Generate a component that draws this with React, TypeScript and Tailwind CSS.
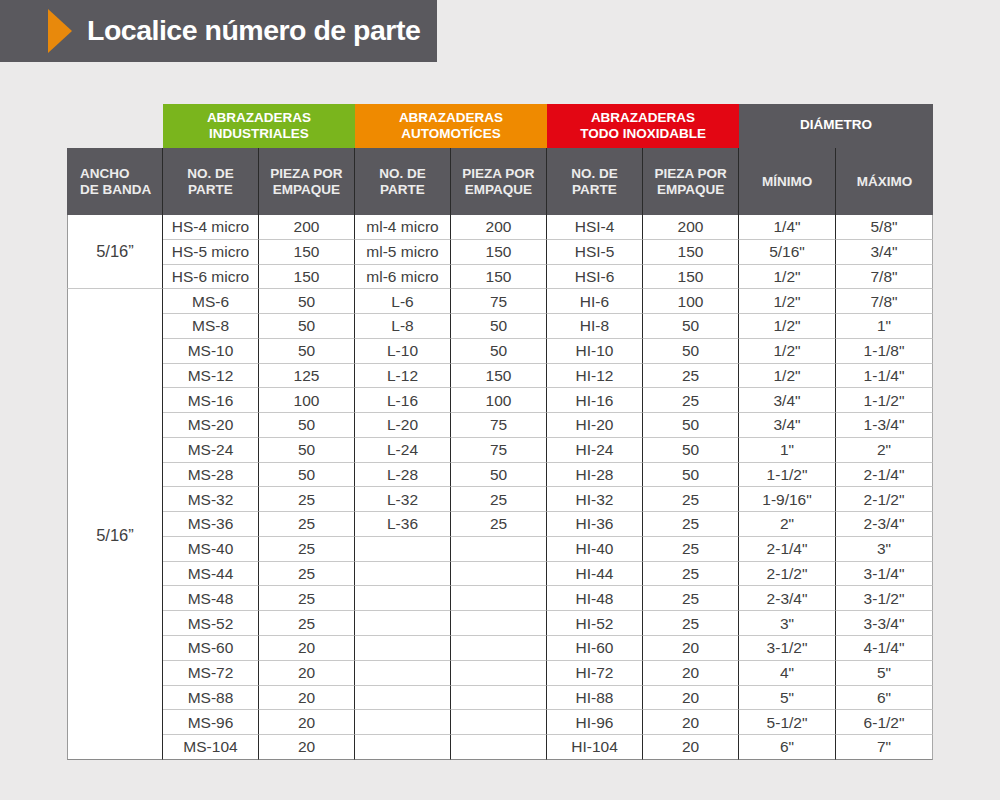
const top = [
  ["HS-4 micro", "200", "ml-4 micro", "200", "HSI-4", "200", '1/4"', '5/8"'],
  ["HS-5 micro", "150", "ml-5 micro", "150", "HSI-5", "150", '5/16"', '3/4"'],
  ["HS-6 micro", "150", "ml-6 micro", "150", "HSI-6", "150", '1/2"', '7/8"'],
];

const rest = [
  ["MS-6", "50", "L-6", "75", "HI-6", "100", '1/2"', '7/8"'],
  ["MS-8", "50", "L-8", "50", "HI-8", "50", '1/2"', '1"'],
  ["MS-10", "50", "L-10", "50", "HI-10", "50", '1/2"', '1-1/8"'],
  ["MS-12", "125", "L-12", "150", "HI-12", "25", '1/2"', '1-1/4"'],
  ["MS-16", "100", "L-16", "100", "HI-16", "25", '3/4"', '1-1/2"'],
  ["MS-20", "50", "L-20", "75", "HI-20", "50", '3/4"', '1-3/4"'],
  ["MS-24", "50", "L-24", "75", "HI-24", "50", '1"', '2"'],
  ["MS-28", "50", "L-28", "50", "HI-28", "50", '1-1/2"', '2-1/4"'],
  ["MS-32", "25", "L-32", "25", "HI-32", "25", '1-9/16"', '2-1/2"'],
  ["MS-36", "25", "L-36", "25", "HI-36", "25", '2"', '2-3/4"'],
  ["MS-40", "25", "", "", "HI-40", "25", '2-1/4"', '3"'],
  ["MS-44", "25", "", "", "HI-44", "25", '2-1/2"', '3-1/4"'],
  ["MS-48", "25", "", "", "HI-48", "25", '2-3/4"', '3-1/2"'],
  ["MS-52", "25", "", "", "HI-52", "25", '3"', '3-3/4"'],
  ["MS-60", "20", "", "", "HI-60", "20", '3-1/2"', '4-1/4"'],
  ["MS-72", "20", "", "", "HI-72", "20", '4"', '5"'],
  ["MS-88", "20", "", "", "HI-88", "20", '5"', '6"'],
  ["MS-96", "20", "", "", "HI-96", "20", '5-1/2"', '6-1/2"'],
  ["MS-104", "20", "", "", "HI-104", "20", '6"', '7"'],
];

const subHeads = [
  ["NO. DE", "PARTE"],
  ["PIEZA POR", "EMPAQUE"],
  ["NO. DE", "PARTE"],
  ["PIEZA POR", "EMPAQUE"],
  ["NO. DE", "PARTE"],
  ["PIEZA POR", "EMPAQUE"],
  ["MÍNIMO"],
  ["MÁXIMO"],
];

const Row = ({ cells, first, last }: { cells: string[]; first?: React.ReactNode; last?: boolean }) => (
  <tr className="h-[24.77px]">
    {first}
    {cells.map((c, i) => (
      <td
        key={i}
        className={`p-0 text-center align-middle border-b border-r ${
          last ? "border-b-[#8a8a8a]" : "border-b-[#c8c8c8]"
        } ${i === 7 ? "border-r-[#a8a8a8]" : "border-r-[#2a2a2a]"}`}
      >
        {c}
      </td>
    ))}
  </tr>
);

export default function App() {
  return (
    <div
      className="w-[1000px] h-[800px] bg-[#ebeaea] overflow-hidden"
      style={{ fontFamily: '"Liberation Sans", Arial, sans-serif' }}
    >
      <div className="w-[437px] h-[62px] bg-[#5a595e] flex items-center">
        <svg width="24" height="44" viewBox="0 0 24 44" className="ml-[48px] mt-[-1px]">
          <polygon points="0,0 24,22 0,44" fill="#e8890c" />
        </svg>
        <h1 className="ml-[15px] text-white font-bold text-[28.5px] tracking-[-0.5px] leading-none mt-[-2px]">
          Localice número de parte
        </h1>
      </div>

      <div className="mt-[42px] ml-[67px]">
        <table className="table-fixed w-[866px] border-separate border-spacing-0 text-[15.5px] text-[#404040]">
          <colgroup>
            <col className="w-[96px]" />
            <col className="w-[96px]" />
            <col className="w-[96px]" />
            <col className="w-[96px]" />
            <col className="w-[96px]" />
            <col className="w-[96px]" />
            <col className="w-[96px]" />
            <col className="w-[97px]" />
            <col className="w-[97px]" />
          </colgroup>
          <thead>
            <tr className="h-[44px] text-white font-bold text-[13.5px] leading-[16px]">
              <th className="p-0"></th>
              <th colSpan={2} className="p-0 bg-[#7ab51d] font-bold">
                ABRAZADERAS
                <br />
                INDUSTRIALES
              </th>
              <th colSpan={2} className="p-0 bg-[#ef8a00] font-bold">
                ABRAZADERAS
                <br />
                AUTOMOTÍCES
              </th>
              <th colSpan={2} className="p-0 bg-[#e30613] font-bold">
                ABRAZADERAS
                <br />
                TODO INOXIDABLE
              </th>
              <th colSpan={2} className="p-0 bg-[#5a595e] font-bold pb-[3px]">
                DIÁMETRO
              </th>
            </tr>
            <tr className="h-[67px] bg-[#5a595e] text-[#ececec] font-bold text-[13.5px] leading-[16px]">
              <th className="p-0 pl-[13px] text-left font-bold border-r border-[#2a2a2a]">
                ANCHO
                <br />
                DE BANDA
              </th>
              {subHeads.map((h, i) => (
                <th
                  key={i}
                  className={`p-0 font-bold ${i < 7 ? "border-r border-[#2a2a2a]" : ""}`}
                >
                  {h[0]}
                  {h[1] && (
                    <>
                      <br />
                      {h[1]}
                    </>
                  )}
                </th>
              ))}
            </tr>
          </thead>
          <tbody className="bg-white">
            {top.map((r, i) => (
              <Row
                key={i}
                cells={r}
                first={
                  i === 0 ? (
                    <td
                      rowSpan={3}
                      className="p-0 text-center align-middle border-l border-l-[#9a9a9a] border-r border-r-[#2a2a2a] border-b border-b-[#c8c8c8] text-[16.5px]"
                    >
                      5/16”
                    </td>
                  ) : undefined
                }
              />
            ))}
            {rest.map((r, i) => (
              <Row
                key={i}
                cells={r}
                last={i === rest.length - 1}
                first={
                  i === 0 ? (
                    <td
                      rowSpan={19}
                      className="p-0 pt-[22px] text-center align-middle border-l border-l-[#9a9a9a] border-r border-r-[#2a2a2a] border-b border-b-[#8a8a8a] text-[16.5px]"
                    >
                      5/16”
                    </td>
                  ) : undefined
                }
              />
            ))}
          </tbody>
        </table>
      </div>
    </div>
  );
}
